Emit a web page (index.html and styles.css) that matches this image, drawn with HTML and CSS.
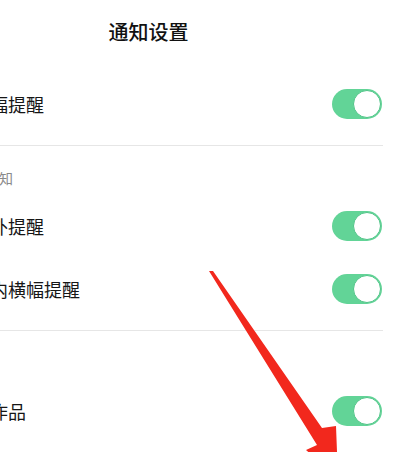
FILE: index.html
```html
<!DOCTYPE html>
<html lang="zh-CN">
<head>
<meta charset="utf-8">
<title>通知设置</title>
<link rel="stylesheet" href="styles.css">
</head>
<body>
<div class="page">
  <header class="topbar"><h1 class="title">通知设置</h1></header>
  <div class="list">
    <section class="group first">
      <div class="row"><span class="label">横幅提醒</span><span class="switch on"></span></div>
    </section>
    <div class="divider"></div>
    <section class="group">
      <div class="group-title">推送通知</div>
      <div class="row"><span class="label">应用外提醒</span><span class="switch on"></span></div>
      <div class="row"><span class="label">应用内横幅提醒</span><span class="switch on"></span></div>
    </section>
    <div class="divider"></div>
    <section class="group">
      <div class="group-title">作品</div>
      <div class="row"><span class="label">好友作品</span><span class="switch on"></span></div>
    </section>
  </div>
  <svg class="arrow" width="394" height="452" viewBox="0 0 394 452" aria-hidden="true">
    <polygon points="209,271 213,271 322,428 336,426 338,478 306,450 317,445" fill="#f2281d"/>
  </svg>
</div>
</body>
</html>
```

FILE: styles.css
```css
html, body {
  margin: 0;
  padding: 0;
  background: #ffffff;
}
body {
  width: 394px;
  height: 452px;
  overflow: hidden;
  font-family: "Noto Sans CJK SC", "Noto Sans", sans-serif;
  color: #161616;
}
.page {
  position: relative;
  width: 394px;
  height: 452px;
  overflow: hidden;
}
.topbar {
  height: 64px;
  width: 297px;
  display: flex;
  align-items: center;
  justify-content: center;
}
.title {
  margin: 0;
  font-size: 20px;
  font-weight: 500;
  line-height: 28px;
  color: #111111;
}
.list {
  margin-left: -46px;
  margin-right: 11px;
}
.group.first {
  padding-top: 8px;
}
.group.first .row {
  padding-left: 18px;
}
.row {
  height: 63px;
  display: flex;
  align-items: center;
  justify-content: space-between;
}
.label {
  font-size: 18px;
  line-height: 24px;
  white-space: nowrap;
}
.group-title {
  font-size: 14px;
  line-height: 20px;
  color: #8a8a8a;
  padding-top: 22px;
  padding-bottom: 6px;
  padding-left: 3px;
  white-space: nowrap;
}
.divider {
  height: 1px;
  background: #e6e6e6;
  margin-top: 10px;
}
.switch {
  position: relative;
  width: 50px;
  height: 30px;
  border-radius: 15px;
  background: #62d497;
  flex: none;
  margin-right: 1px;
}
.switch::after {
  content: "";
  position: absolute;
  right: 1px;
  top: 1px;
  width: 26px;
  height: 26px;
  border-radius: 50%;
  background: #ffffff;
  border: 1px solid #4fc487;
}
.arrow {
  position: absolute;
  left: 0;
  top: 0;
}
```
